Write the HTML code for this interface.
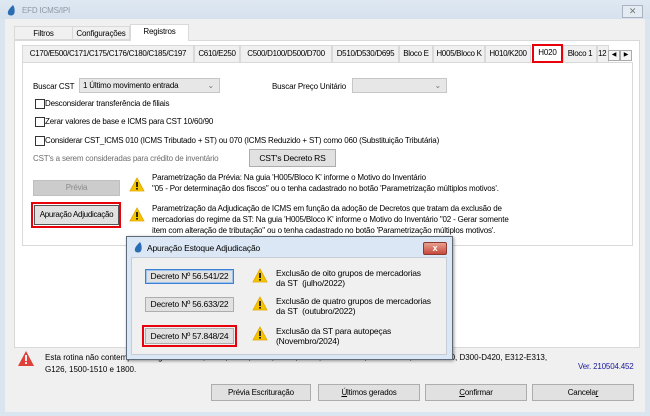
<!DOCTYPE html>
<html><head><meta charset="utf-8"><style>
*{box-sizing:border-box;margin:0;padding:0}
body{width:650px;height:416px;overflow:hidden;background:#f0f0f0;font-family:"Liberation Sans",sans-serif;font-size:8px;letter-spacing:-0.18px;color:#000;position:relative}
.a{position:absolute;white-space:nowrap}
.btn{position:absolute;background:#e1e1e1;border:1px solid #adadad;text-align:center;line-height:14px}
.tab{position:absolute;top:45px;height:17px;border:1px solid #d9d9d9;border-bottom:none;background:#f0f0f0;text-align:center;line-height:16px;letter-spacing:-0.3px}
.cb{position:absolute;width:10px;height:10px;border:1px solid #333;background:#fff}
.warn{position:absolute;width:16px;height:15px}
</style></head><body>
<div class="a" style="left:0;top:0;width:650px;height:416px;background:#dbe5f0"></div>
<div class="a" style="left:0;top:0;width:650px;height:19px;background:linear-gradient(#dfe8f2,#d6e1ed)"></div>
<svg class="a" style="left:7px;top:5px" width="9" height="11" viewBox="0 0 9 11"><path d="M6 0C3 3 0 6 1 9c1 2 5 2 6 0C8 7 8 3 6 0z" fill="#2a6db5"/></svg>
<div class="a" style="left:22px;top:6px;color:#8c99a8;font-size:8px">EFD ICMS/IPI</div>
<div class="a" style="left:622px;top:5px;width:21px;height:13px;border:1px solid #a9b4c0;background:#e4ebf2;color:#777;text-align:center;line-height:11px;font-size:9px">✕</div>
<div class="a" style="left:5px;top:19px;width:640px;height:393px;background:#f0f0f0"></div>
<div class="a" style="left:14px;top:26px;width:59px;height:14px;border:1px solid #d9d9d9;background:#f0f0f0;text-align:center;line-height:13px">Filtros</div>
<div class="a" style="left:73px;top:26px;width:57px;height:14px;border:1px solid #d9d9d9;border-left:none;background:#f0f0f0;text-align:center;line-height:13px">Configurações</div>
<div class="a" style="left:130px;top:24px;width:59px;height:17px;border:1px solid #d9d9d9;border-bottom:none;background:#fff;text-align:center;line-height:14px;z-index:2">Registros</div>
<div class="a" style="left:14px;top:40px;width:626px;height:308px;border:1px solid #d9d9d9;background:#fff"></div>
<div class="tab" style="left:22px;width:172px">C170/E500/C171/C175/C176/C180/C185/C197</div>
<div class="tab" style="left:194px;width:46px">C610/E250</div>
<div class="tab" style="left:240px;width:92px">C500/D100/D500/D700</div>
<div class="tab" style="left:332px;width:67px">D510/D530/D695</div>
<div class="tab" style="left:399px;width:34px">Bloco E</div>
<div class="tab" style="left:433px;width:52px">H005/Bloco K</div>
<div class="tab" style="left:485px;width:46px">H010/K200</div>
<div class="a" style="left:532px;top:44px;width:31px;height:19px;border:2px solid #e8000b;background:#fff;text-align:center;line-height:14px;z-index:3">H020</div>
<div class="tab" style="left:563px;width:34px">Bloco 1</div>
<div class="tab" style="left:597px;width:12px;text-align:left;overflow:hidden">12</div>
<div class="a" style="left:608px;top:50px;width:12px;height:11px;border:1px solid #aaa;background:#f5f5f5;font-size:6px;text-align:center;line-height:9px">◀</div>
<div class="a" style="left:620px;top:50px;width:12px;height:11px;border:1px solid #aaa;background:#f5f5f5;font-size:6px;text-align:center;line-height:9px">▶</div>
<div class="a" style="left:22px;top:62px;width:611px;height:184px;border:1px solid #d9d9d9;background:#fff"></div>
<div class="a" style="left:33px;top:82px">Buscar CST</div>
<div class="a" style="left:79px;top:78px;width:141px;height:15px;border:1px solid #c6c6c6;background:#e7e7e7;padding-left:3px;line-height:13px">1 Último movimento entrada<span style="position:absolute;right:5px;color:#777">⌄</span></div>
<div class="a" style="left:272px;top:82px">Buscar Preço Unitário</div>
<div class="a" style="left:352px;top:78px;width:95px;height:15px;border:1px solid #c6c6c6;background:#e7e7e7;line-height:13px"><span style="position:absolute;right:5px;color:#777">⌄</span></div>
<div class="cb" style="left:35px;top:99px"></div><div class="a" style="left:45px;top:99px">Desconsiderar transferência de filiais</div>
<div class="cb" style="left:35px;top:117px"></div><div class="a" style="left:45px;top:117px">Zerar valores de base e ICMS para CST 10/60/90</div>
<div class="cb" style="left:35px;top:136px"></div><div class="a" style="left:45px;top:136px">Considerar CST_ICMS 010 (ICMS Tributado + ST) ou 070 (ICMS Reduzido + ST) como 060 (Substituição Tributária)</div>
<div class="a" style="left:33px;top:154px;color:#6d6d6d">CST's a serem consideradas para crédito de inventário</div>
<div class="btn" style="left:249px;top:149px;width:87px;height:18px;line-height:16px;font-size:8.5px">CST's Decreto RS</div>
<div class="btn" style="left:33px;top:180px;width:87px;height:16px;color:#8a8a8a;background:#cccccc;border-color:#bfbfbf">Prévia</div>
<svg class="warn" style="left:129px;top:177px" viewBox="0 0 16 15"><path d="M8 1L15 14H1z" fill="#f5c400" stroke="#e0a800" stroke-width=".8"/><rect x="7.2" y="5" width="1.6" height="5" fill="#000"/><rect x="7.2" y="11" width="1.6" height="1.6" fill="#000"/></svg>
<div class="a" style="left:152px;top:172px;line-height:11px">Parametrização da Prévia: Na guia 'H005/Bloco K' informe o Motivo do Inventário<br>"05 - Por determinação dos fiscos" ou o tenha cadastrado no botão 'Parametrização múltiplos motivos'.</div>
<div class="a" style="left:31px;top:202px;width:90px;height:26px;border:2px solid #e8000b"></div>
<div class="btn" style="left:34px;top:205px;width:85px;height:20px;line-height:18px;border-color:#555;letter-spacing:-0.3px">Apuração Adjudicação</div>
<svg class="warn" style="left:129px;top:207px" viewBox="0 0 16 15"><path d="M8 1L15 14H1z" fill="#f5c400" stroke="#e0a800" stroke-width=".8"/><rect x="7.2" y="5" width="1.6" height="5" fill="#000"/><rect x="7.2" y="11" width="1.6" height="1.6" fill="#000"/></svg>
<div class="a" style="left:152px;top:203px;line-height:11px">Parametrização da Adjudicação de ICMS em função da adoção de Decretos que tratam da exclusão de<br>mercadorias do regime da ST: Na guia 'H005/Bloco K' informe o Motivo do Inventário "02 - Gerar somente<br>item com alteração de tributação" ou o tenha cadastrado no botão 'Parametrização múltiplos motivos'.</div>
<svg class="a" style="left:18px;top:351px" width="16" height="15" viewBox="0 0 16 15"><path d="M8 0L16 15H0z" fill="#e0403a"/><rect x="7.1" y="4" width="1.8" height="6" fill="#fff"/><rect x="7.1" y="11" width="1.8" height="2" fill="#fff"/></svg>
<div class="a" style="left:45px;top:352px;line-height:12px;letter-spacing:0">Esta rotina não contempla os registros C100, C111, C116, C174, C176, C310, C700-C791, D140-D150, D170-D180, D300-D420, E312-E313,<br>G126, 1500-1510 e 1800.</div>
<div class="a" style="left:578px;top:362px;color:#1a1aa0">Ver. 210504.452</div>
<div class="btn" style="left:211px;top:384px;width:100px;height:17px;line-height:15px">Prévia Escrituração</div>
<div class="btn" style="left:318px;top:384px;width:102px;height:17px;line-height:15px"><u>Ú</u>ltimos gerados</div>
<div class="btn" style="left:425px;top:384px;width:102px;height:17px;line-height:15px"><u>C</u>onfirmar</div>
<div class="btn" style="left:532px;top:384px;width:102px;height:17px;line-height:15px">Cancela<u>r</u></div>
<div class="a" style="left:126px;top:236px;width:327px;height:124px;background:#dbe7f4;border:1px solid #5e6a78;box-shadow:1px 1px 3px rgba(0,0,0,.4)"></div>
<svg class="a" style="left:134px;top:242px" width="9" height="11" viewBox="0 0 9 11"><path d="M6 0C3 3 0 6 1 9c1 2 5 2 6 0C8 7 8 3 6 0z" fill="#2a6db5"/></svg>
<div class="a" style="left:147px;top:243px;font-size:8.5px">Apuração Estoque Adjudicação</div>
<div class="a" style="left:423px;top:242px;width:24px;height:13px;border:1px solid #8a3a30;border-radius:2px;background:linear-gradient(#e8a090,#c8483a);color:#fff;text-align:center;line-height:11px;font-size:9px;font-weight:bold">x</div>
<div class="a" style="left:131px;top:257px;width:316px;height:98px;background:#f0f0f0;border:1px solid #c5cdd6"></div>
<div class="btn" style="left:145px;top:269px;width:89px;height:15px;border:1px solid #3c7fd3;box-shadow:inset 0 0 0 1px #9cc4ef;line-height:13px;font-size:8.5px">Decreto Nº 56.541/22</div>
<div class="btn" style="left:145px;top:297px;width:89px;height:15px;line-height:13px;font-size:8.5px">Decreto Nº 56.633/22</div>
<div class="a" style="left:142px;top:325px;width:95px;height:22px;border:2px solid #e8000b"></div>
<div class="btn" style="left:145px;top:328px;width:89px;height:16px;line-height:14px;font-size:8.5px">Decreto Nº 57.848/24</div>
<svg class="warn" style="left:252px;top:268px" viewBox="0 0 16 15"><path d="M8 1L15 14H1z" fill="#f5c400" stroke="#e0a800" stroke-width=".8"/><rect x="7.2" y="5" width="1.6" height="5" fill="#000"/><rect x="7.2" y="11" width="1.6" height="1.6" fill="#000"/></svg>
<svg class="warn" style="left:252px;top:296px" viewBox="0 0 16 15"><path d="M8 1L15 14H1z" fill="#f5c400" stroke="#e0a800" stroke-width=".8"/><rect x="7.2" y="5" width="1.6" height="5" fill="#000"/><rect x="7.2" y="11" width="1.6" height="1.6" fill="#000"/></svg>
<svg class="warn" style="left:252px;top:326px" viewBox="0 0 16 15"><path d="M8 1L15 14H1z" fill="#f5c400" stroke="#e0a800" stroke-width=".8"/><rect x="7.2" y="5" width="1.6" height="5" fill="#000"/><rect x="7.2" y="11" width="1.6" height="1.6" fill="#000"/></svg>
<div class="a" style="left:276px;top:268px;line-height:10px;font-size:8.5px">Exclusão de oito grupos de mercadorias<br>da ST&nbsp; (julho/2022)</div>
<div class="a" style="left:276px;top:296px;line-height:10px;font-size:8.5px">Exclusão de quatro grupos de mercadorias<br>da ST&nbsp; (outubro/2022)</div>
<div class="a" style="left:276px;top:326px;line-height:10px;font-size:8.5px">Exclusão da ST para autopeças<br>(Novembro/2024)</div>
</body></html>
